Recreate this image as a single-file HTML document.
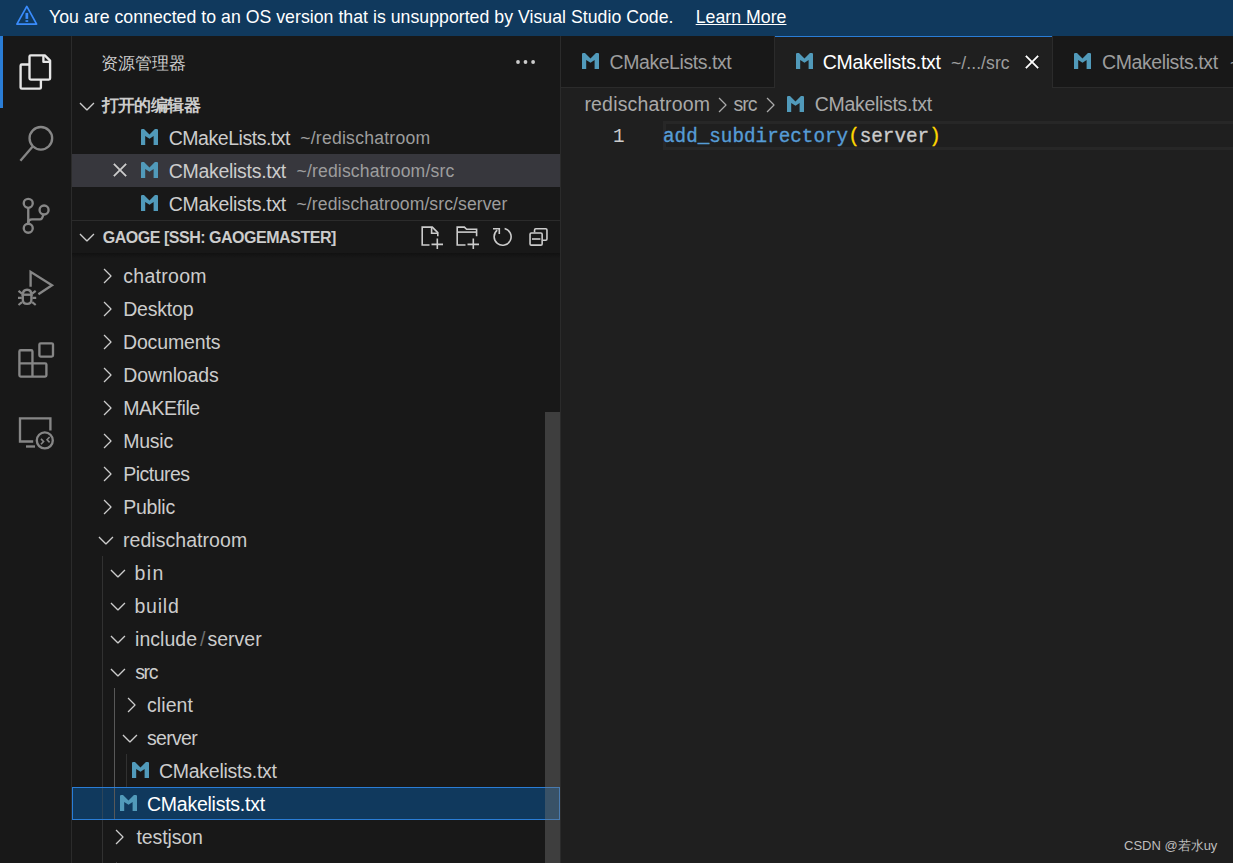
<!DOCTYPE html>
<html><head><meta charset="utf-8">
<style>
*{margin:0;padding:0;box-sizing:border-box}
html,body{width:1233px;height:863px;overflow:hidden;background:#1f1f1f}
body{position:relative;font-family:"Liberation Sans",sans-serif;color:#cccccc}
.a{position:absolute}
.t{position:absolute;white-space:pre;line-height:1}
svg{position:absolute;overflow:visible}
</style></head><body>
<div class="a" style="left:0;top:0;width:1233px;height:36px;background:#10395d"></div>
<div class="a" style="left:0;top:36px;width:71px;height:827px;background:#181818"></div>
<div class="a" style="left:71px;top:36px;width:1px;height:827px;background:#2b2b2b"></div>
<div class="a" style="left:72px;top:36px;width:488px;height:827px;background:#181818"></div>
<div class="a" style="left:560px;top:36px;width:1px;height:827px;background:#2b2b2b"></div>
<div class="a" style="left:561px;top:36px;width:672px;height:52px;background:#181818"></div>
<div class="a" style="left:561px;top:87px;width:672px;height:1px;background:#2b2b2b"></div>
<div class="a" style="left:774px;top:36px;width:1px;height:52px;background:#2b2b2b"></div>
<div class="a" style="left:775px;top:36px;width:277px;height:52px;background:#1f1f1f"></div>
<div class="a" style="left:775px;top:36px;width:277px;height:1px;background:#2a7dd6"></div>
<div class="a" style="left:1052px;top:36px;width:1px;height:52px;background:#2b2b2b"></div>
<svg style="left:0;top:0" width="60" height="36" viewBox="0 0 60 36">
  <path d="M26.8 6.4 L36.6 24.1 L16.9 24.1 Z" fill="none" stroke="#3a8cfc" stroke-width="1.7" stroke-linejoin="round"/>
  <rect x="25.5" y="12.9" width="2.7" height="6" fill="#3a8cfc"/>
  <rect x="25.5" y="20.2" width="2.7" height="1.7" fill="#3a8cfc"/>
</svg>
<div class="t" style="left:49.02px;top:8.62px;font-size:17.7px;color:#ffffff;letter-spacing:0.027px;">You are connected to an OS version that is unsupported by Visual Studio Code.</div>
<div class="t" style="left:695.68px;top:8.62px;font-size:17.7px;color:#ffffff;letter-spacing:0.036px;text-decoration:underline">Learn More</div>
<div class="a" style="left:0;top:36px;width:3px;height:72px;background:#2a7dd6"></div>

<svg style="left:0;top:0" width="1" height="1" fill="none" stroke-width="2.35">
 <g stroke="#e6e6e6" stroke-linejoin="round">
  <path d="M29.5 64.5 H21.8 q-1.2 0 -1.2 1.2 V87.4 q0 1.2 1.2 1.2 H39.7 q1.2 0 1.2 -1.2 V79.6"/>
  <path d="M30.8 55.3 H44.8 L50.1 60.6 V78.3 q0 1.3 -1.3 1.3 H30.8 q-1.3 0 -1.3 -1.3 V56.6 q0 -1.3 1.3 -1.3 Z"/>
  <path d="M43.4 55.3 V61.8 H50.1"/>
 </g>
 <g stroke="#868686">
  <circle cx="40.85" cy="138.3" r="11.3"/>
  <path d="M32.9 146.3 L20.4 160.8"/>
  <circle cx="28.25" cy="203.3" r="4.5"/>
  <circle cx="28.25" cy="228.2" r="4.5"/>
  <circle cx="44.07" cy="210" r="4.5"/>
  <path d="M28.25 207.8 V223.7"/>
  <path d="M28.25 223 Q28.25 219.3 32 219.3 H40 Q42.3 219.3 43.3 214.4"/>
  <path d="M30.6 286.8 V271.8 L52 285.2 L38.4 294.2" stroke-linejoin="miter"/>
  <path d="M22.8 294.7 q0 -5 4.3 -5 q4.3 0 4.3 5 V299.5 q0 4.4 -4.3 4.4 q-4.3 0 -4.3 -4.4 Z"/>
  <path d="M21.5 294.7 H32.7"/>
  <path d="M18.5 290.8 L22 293.6 M18 297.9 H21.8 M18.5 305 L22 302.2 M35.7 290.8 L32.2 293.6 M36.2 297.9 H32.4 M35.7 305 L32.2 302.2" stroke-width="2.2"/>
  <path d="M32.45 376.6 V351.5 q0 -1.3 -1.3 -1.3 H20.7 q-1.3 0 -1.3 1.3 V375.3 q0 1.3 1.3 1.3 H45.1 q1.3 0 1.3 -1.3 V364.6 q0 -1.3 -1.3 -1.3 H19.4"/>
  <rect x="39.4" y="343.3" width="13.6" height="13.3" rx="1.3"/>
  <path d="M33.2 441.5 H20 V418.3 H50.4 V430.6"/>
  <path d="M26 446.5 H35"/>
  <circle cx="44.8" cy="440.4" r="8"/>
  <path d="M41 438.9 L43.6 441.6 L41 444.3 M49.6 437 L47 439.7 L49.6 442.4" stroke-width="1.6"/>
 </g>
</svg>
<div class="t" style="left:100.8px;top:55px;font-size:16.5px;color:#cccccc;">资源管理器</div>
<svg style="left:0;top:0" width="1" height="1"><circle cx="518" cy="62" r="1.9" fill="#cccccc"/><circle cx="525.5" cy="62" r="1.9" fill="#cccccc"/><circle cx="533.1" cy="62" r="1.9" fill="#cccccc"/></svg>
<svg style="left:75px;top:94px" width="24" height="24" viewBox="0 0 16 16"><path d="M7.976 10.072l4.357-4.357.62.618L8.284 11h-.618L3 6.333l.619-.618 4.357 4.357z" fill="#cccccc"/></svg>
<div class="t" style="left:101.5px;top:96.5px;font-size:16.5px;color:#cccccc;font-weight:bold;letter-spacing:-0.55px">打开的编辑器</div>
<div class="a" style="left:72px;top:154px;width:488px;height:33px;background:#37373d"></div>
<svg style="left:141px;top:129px" width="18" height="17"><path d="M0.00 16.10 L0.00 0.80 L0.80 0.00 L3.00 0.00 L8.50 5.60 L13.90 0.00 L16.20 0.00 L17.00 0.80 L17.00 16.10 L12.60 16.10 L12.60 7.00 L8.50 9.80 L4.20 7.00 L4.20 16.10 Z" fill="#519aba"/></svg>
<div class="t" style="left:168.74px;top:128.59px;font-size:19.5px;color:#cccccc;letter-spacing:-0.468px;">CMakeLists.txt</div>
<div class="t" style="left:300.24px;top:130.10px;font-size:17.6px;color:#9d9d9d;letter-spacing:0.229px;">~/redischatroom</div>
<svg style="left:141px;top:162px" width="18" height="17"><path d="M0.00 16.10 L0.00 0.80 L0.80 0.00 L3.00 0.00 L8.50 5.60 L13.90 0.00 L16.20 0.00 L17.00 0.80 L17.00 16.10 L12.60 16.10 L12.60 7.00 L8.50 9.80 L4.20 7.00 L4.20 16.10 Z" fill="#519aba"/></svg>
<div class="t" style="left:168.74px;top:161.59px;font-size:19.5px;color:#cccccc;letter-spacing:-0.295px;">CMakelists.txt</div>
<div class="t" style="left:296.50px;top:163.10px;font-size:17.6px;color:#9d9d9d;letter-spacing:0.151px;">~/redischatroom/src</div>
<svg style="left:108px;top:158px" width="24" height="24" viewBox="0 0 16 16"><path d="M8 8.707l3.646 3.647.708-.707L8.707 8l3.647-3.646-.707-.708L8 7.293 4.354 3.646l-.707.708L7.293 8l-3.646 3.646.707.708L8 8.707z" fill="#cccccc" stroke="#cccccc" stroke-width="0.3"/></svg>
<svg style="left:141px;top:195px" width="18" height="17"><path d="M0.00 16.10 L0.00 0.80 L0.80 0.00 L3.00 0.00 L8.50 5.60 L13.90 0.00 L16.20 0.00 L17.00 0.80 L17.00 16.10 L12.60 16.10 L12.60 7.00 L8.50 9.80 L4.20 7.00 L4.20 16.10 Z" fill="#519aba"/></svg>
<div class="t" style="left:168.74px;top:194.59px;font-size:19.5px;color:#cccccc;letter-spacing:-0.295px;">CMakelists.txt</div>
<div class="t" style="left:296.50px;top:196.10px;font-size:17.6px;color:#9d9d9d;letter-spacing:0.083px;">~/redischatroom/src/server</div>
<div class="a" style="left:72px;top:220px;width:488px;height:1px;background:#2b2b2b"></div>
<svg style="left:75px;top:225px" width="24" height="24" viewBox="0 0 16 16"><path d="M7.976 10.072l4.357-4.357.62.618L8.284 11h-.618L3 6.333l.619-.618 4.357 4.357z" fill="#cccccc"/></svg>
<div class="t" style="left:102.74px;top:230.06px;font-size:16px;color:#cccccc;font-weight:bold;letter-spacing:-0.473px;">GAOGE [SSH: GAOGEMASTER]</div>

<svg style="left:0;top:0" width="1" height="1" fill="none" stroke="#cccccc" stroke-width="1.6">
  <path d="M429.5 245 H422.2 V227.1 H432.3 L437.8 232.6 V236.2"/>
  <path d="M431.6 227.1 V233.3 H437.8"/>
  <path d="M431.5 244.4 H443 M437.3 238.4 V249"/>
  <path d="M465.5 245 H457.2 V227.1 H464.4 L466.6 229.3 H476.6 V236.2"/>
  <path d="M457.2 232.1 H476.6"/>
  <path d="M467.5 244.4 H479 M473.3 238.4 V249"/>
  <path d="M504.6 228.5 A8.5 8.5 0 1 1 497.2 230.2"/>
  <path d="M493 228.8 H499.3 V234"/>
  <path d="M534.55 232.3 V230 q0 -1.25 1.25 -1.25 H545.7 q1.25 0 1.25 1.25 V239 q0 1.25 -1.25 1.25 H542.5"/>
  <rect x="530.05" y="232.95" width="12.1" height="12.2" rx="1.25"/>
  <path d="M532 239 H540.4"/>
</svg>
<div class="a" style="left:72px;top:253px;width:488px;height:5px;background:linear-gradient(#111111,rgba(24,24,24,0))"></div>
<div class="a" style="left:72px;top:787px;width:488px;height:33px;background:#10395d"></div>
<div class="a" style="left:102px;top:556px;width:1px;height:307px;background:rgba(88,88,88,0.4)"></div>
<div class="a" style="left:114px;top:688px;width:1px;height:132px;background:#585858"></div>
<div class="a" style="left:126px;top:754px;width:1px;height:33px;background:rgba(88,88,88,0.4)"></div>
<svg style="left:94.5px;top:263.5px" width="24" height="24" viewBox="0 0 16 16"><path d="M10.072 8.024L5.715 3.667l.618-.62L11 7.716v.618L6.333 13l-.618-.619 4.357-4.357z" fill="#cccccc"/></svg>
<div class="t" style="left:123.24px;top:266.59px;font-size:19.5px;color:#cccccc;letter-spacing:0.297px;">chatroom</div>
<svg style="left:94.5px;top:296.5px" width="24" height="24" viewBox="0 0 16 16"><path d="M10.072 8.024L5.715 3.667l.618-.62L11 7.716v.618L6.333 13l-.618-.619 4.357-4.357z" fill="#cccccc"/></svg>
<div class="t" style="left:123.20px;top:299.59px;font-size:19.5px;color:#cccccc;letter-spacing:-0.187px;">Desktop</div>
<svg style="left:94.5px;top:329.5px" width="24" height="24" viewBox="0 0 16 16"><path d="M10.072 8.024L5.715 3.667l.618-.62L11 7.716v.618L6.333 13l-.618-.619 4.357-4.357z" fill="#cccccc"/></svg>
<div class="t" style="left:122.94px;top:332.59px;font-size:19.5px;color:#cccccc;letter-spacing:-0.120px;">Documents</div>
<svg style="left:94.5px;top:362.5px" width="24" height="24" viewBox="0 0 16 16"><path d="M10.072 8.024L5.715 3.667l.618-.62L11 7.716v.618L6.333 13l-.618-.619 4.357-4.357z" fill="#cccccc"/></svg>
<div class="t" style="left:123.20px;top:365.59px;font-size:19.5px;color:#cccccc;letter-spacing:-0.100px;">Downloads</div>
<svg style="left:94.5px;top:395.5px" width="24" height="24" viewBox="0 0 16 16"><path d="M10.072 8.024L5.715 3.667l.618-.62L11 7.716v.618L6.333 13l-.618-.619 4.357-4.357z" fill="#cccccc"/></svg>
<div class="t" style="left:123.20px;top:398.59px;font-size:19.5px;color:#cccccc;letter-spacing:-0.457px;">MAKEfile</div>
<svg style="left:94.5px;top:428.5px" width="24" height="24" viewBox="0 0 16 16"><path d="M10.072 8.024L5.715 3.667l.618-.62L11 7.716v.618L6.333 13l-.618-.619 4.357-4.357z" fill="#cccccc"/></svg>
<div class="t" style="left:123.20px;top:431.59px;font-size:19.5px;color:#cccccc;letter-spacing:-0.240px;">Music</div>
<svg style="left:94.5px;top:461.5px" width="24" height="24" viewBox="0 0 16 16"><path d="M10.072 8.024L5.715 3.667l.618-.62L11 7.716v.618L6.333 13l-.618-.619 4.357-4.357z" fill="#cccccc"/></svg>
<div class="t" style="left:123.20px;top:464.59px;font-size:19.5px;color:#cccccc;letter-spacing:-0.503px;">Pictures</div>
<svg style="left:94.5px;top:494.5px" width="24" height="24" viewBox="0 0 16 16"><path d="M10.072 8.024L5.715 3.667l.618-.62L11 7.716v.618L6.333 13l-.618-.619 4.357-4.357z" fill="#cccccc"/></svg>
<div class="t" style="left:123.20px;top:497.59px;font-size:19.5px;color:#cccccc;letter-spacing:-0.224px;">Public</div>
<svg style="left:94px;top:527.5px" width="24" height="24" viewBox="0 0 16 16"><path d="M7.976 10.072l4.357-4.357.62.618L8.284 11h-.618L3 6.333l.619-.618 4.357 4.357z" fill="#cccccc"/></svg>
<div class="t" style="left:122.96px;top:530.59px;font-size:19.5px;color:#cccccc;letter-spacing:0.053px;">redischatroom</div>
<svg style="left:106px;top:560.5px" width="24" height="24" viewBox="0 0 16 16"><path d="M7.976 10.072l4.357-4.357.62.618L8.284 11h-.618L3 6.333l.619-.618 4.357 4.357z" fill="#cccccc"/></svg>
<div class="t" style="left:134.44px;top:563.59px;font-size:19.5px;color:#cccccc;letter-spacing:1.440px;">bin</div>
<svg style="left:106px;top:593.5px" width="24" height="24" viewBox="0 0 16 16"><path d="M7.976 10.072l4.357-4.357.62.618L8.284 11h-.618L3 6.333l.619-.618 4.357 4.357z" fill="#cccccc"/></svg>
<div class="t" style="left:134.44px;top:596.59px;font-size:19.5px;color:#cccccc;letter-spacing:0.800px;">build</div>
<svg style="left:106px;top:626.5px" width="24" height="24" viewBox="0 0 16 16"><path d="M7.976 10.072l4.357-4.357.62.618L8.284 11h-.618L3 6.333l.619-.618 4.357 4.357z" fill="#cccccc"/></svg>
<div class="t" style="left:135.08px;top:629.59px;font-size:19.5px;color:#cccccc;letter-spacing:0.017px;">include<span style="color:#6e6e6e;margin:0 2px 0 3px">/</span>server</div>
<svg style="left:106px;top:659.5px" width="24" height="24" viewBox="0 0 16 16"><path d="M7.976 10.072l4.357-4.357.62.618L8.284 11h-.618L3 6.333l.619-.618 4.357 4.357z" fill="#cccccc"/></svg>
<div class="t" style="left:135.24px;top:662.59px;font-size:19.5px;color:#cccccc;letter-spacing:-1.360px;">src</div>
<svg style="left:119px;top:692.5px" width="24" height="24" viewBox="0 0 16 16"><path d="M10.072 8.024L5.715 3.667l.618-.62L11 7.716v.618L6.333 13l-.618-.619 4.357-4.357z" fill="#cccccc"/></svg>
<div class="t" style="left:146.98px;top:695.59px;font-size:19.5px;color:#cccccc;letter-spacing:0.096px;">client</div>
<svg style="left:118px;top:725.5px" width="24" height="24" viewBox="0 0 16 16"><path d="M7.976 10.072l4.357-4.357.62.618L8.284 11h-.618L3 6.333l.619-.618 4.357 4.357z" fill="#cccccc"/></svg>
<div class="t" style="left:146.98px;top:728.59px;font-size:19.5px;color:#cccccc;letter-spacing:-0.672px;">server</div>
<svg style="left:131.8px;top:762px" width="18" height="17"><path d="M0.00 16.10 L0.00 0.80 L0.80 0.00 L3.00 0.00 L8.50 5.60 L13.90 0.00 L16.20 0.00 L17.00 0.80 L17.00 16.10 L12.60 16.10 L12.60 7.00 L8.50 9.80 L4.20 7.00 L4.20 16.10 Z" fill="#519aba"/></svg>
<div class="t" style="left:158.96px;top:761.59px;font-size:19.5px;color:#cccccc;letter-spacing:-0.258px;">CMakelists.txt</div>
<svg style="left:119.8px;top:795px" width="18" height="17"><path d="M0.00 16.10 L0.00 0.80 L0.80 0.00 L3.00 0.00 L8.50 5.60 L13.90 0.00 L16.20 0.00 L17.00 0.80 L17.00 16.10 L12.60 16.10 L12.60 7.00 L8.50 9.80 L4.20 7.00 L4.20 16.10 Z" fill="#519aba"/></svg>
<div class="t" style="left:146.98px;top:794.59px;font-size:19.5px;color:#ffffff;letter-spacing:-0.246px;">CMakelists.txt</div>
<svg style="left:107px;top:824.5px" width="24" height="24" viewBox="0 0 16 16"><path d="M10.072 8.024L5.715 3.667l.618-.62L11 7.716v.618L6.333 13l-.618-.619 4.357-4.357z" fill="#cccccc"/></svg>
<div class="t" style="left:136.54px;top:827.59px;font-size:19.5px;color:#cccccc;letter-spacing:-0.114px;">testjson</div>
<svg style="left:107px;top:857.5px" width="24" height="24" viewBox="0 0 16 16"><path d="M10.072 8.024L5.715 3.667l.618-.62L11 7.716v.618L6.333 13l-.618-.619 4.357-4.357z" fill="#cccccc"/></svg>
<div class="a" style="left:72px;top:787px;width:488px;height:33px;border:1px solid #2a7dd6"></div>
<div class="a" style="left:545px;top:412px;width:15px;height:451px;background:rgba(121,121,121,0.4)"></div>
<svg style="left:582px;top:53px" width="18" height="17"><path d="M0.00 16.10 L0.00 0.80 L0.80 0.00 L3.00 0.00 L8.50 5.60 L13.90 0.00 L16.20 0.00 L17.00 0.80 L17.00 16.10 L12.60 16.10 L12.60 7.00 L8.50 9.80 L4.20 7.00 L4.20 16.10 Z" fill="#519aba"/></svg>
<div class="t" style="left:609.50px;top:53.09px;font-size:19.5px;color:#9d9d9d;letter-spacing:-0.431px;">CMakeLists.txt</div>
<svg style="left:796px;top:53px" width="18" height="17"><path d="M0.00 16.10 L0.00 0.80 L0.80 0.00 L3.00 0.00 L8.50 5.60 L13.90 0.00 L16.20 0.00 L17.00 0.80 L17.00 16.10 L12.60 16.10 L12.60 7.00 L8.50 9.80 L4.20 7.00 L4.20 16.10 Z" fill="#519aba"/></svg>
<div class="t" style="left:822.72px;top:53.09px;font-size:19.5px;color:#ffffff;letter-spacing:-0.234px;">CMakelists.txt</div>
<div class="t" style="left:950.96px;top:54.70px;font-size:17.6px;color:#9d9d9d;letter-spacing:0.060px;">~/.../src</div>
<svg style="left:1019.6px;top:50px" width="24" height="24" viewBox="0 0 16 16"><path d="M8 8.707l3.646 3.647.708-.707L8.707 8l3.647-3.646-.707-.708L8 7.293 4.354 3.646l-.707.708L7.293 8l-3.646 3.646.707.708L8 8.707z" fill="#ffffff" stroke="#ffffff" stroke-width="0.3"/></svg>
<svg style="left:1074px;top:53px" width="18" height="17"><path d="M0.00 16.10 L0.00 0.80 L0.80 0.00 L3.00 0.00 L8.50 5.60 L13.90 0.00 L16.20 0.00 L17.00 0.80 L17.00 16.10 L12.60 16.10 L12.60 7.00 L8.50 9.80 L4.20 7.00 L4.20 16.10 Z" fill="#519aba"/></svg>
<div class="t" style="left:1102.00px;top:53.09px;font-size:19.5px;color:#9d9d9d;letter-spacing:-0.406px;">CMakelists.txt</div>
<div class="t" style="left:1230.00px;top:54.70px;font-size:17.6px;color:#9d9d9d;">~/</div>
<div class="t" style="left:584.44px;top:95.39px;font-size:19.5px;color:#a9a9a9;letter-spacing:0.173px;">redischatroom</div>
<svg style="left:710px;top:93px" width="24" height="24" viewBox="0 0 16 16"><path d="M10.072 8.024L5.715 3.667l.618-.62L11 7.716v.618L6.333 13l-.618-.619 4.357-4.357z" fill="#a9a9a9"/></svg>
<div class="t" style="left:733.48px;top:95.39px;font-size:19.5px;color:#a9a9a9;letter-spacing:-1.040px;">src</div>
<svg style="left:758px;top:93px" width="24" height="24" viewBox="0 0 16 16"><path d="M10.072 8.024L5.715 3.667l.618-.62L11 7.716v.618L6.333 13l-.618-.619 4.357-4.357z" fill="#a9a9a9"/></svg>
<svg style="left:787px;top:96px" width="18" height="17"><path d="M0.00 16.10 L0.00 0.80 L0.80 0.00 L3.00 0.00 L8.50 5.60 L13.90 0.00 L16.20 0.00 L17.00 0.80 L17.00 16.10 L12.60 16.10 L12.60 7.00 L8.50 9.80 L4.20 7.00 L4.20 16.10 Z" fill="#519aba"/></svg>
<div class="t" style="left:814.72px;top:95.39px;font-size:19.5px;color:#a9a9a9;letter-spacing:-0.308px;">CMakelists.txt</div>
<div class="a" style="left:663px;top:121px;width:570px;height:28.5px;border:3px solid #272727;border-right:none"></div>
<div class="t" style="left:613px;top:128px;font-family:'Liberation Mono',monospace;font-size:19.3px;color:#cccccc">1</div>
<div class="t" style="left:663px;top:128px;font-family:'Liberation Mono',monospace;font-size:19.3px;color:#cccccc;-webkit-text-stroke:0.35px currentColor"><span style="color:#569cd6">add_subdirectory</span><span style="color:#ffd700">(</span>server<span style="color:#ffd700">)</span></div>
<div class="t" style="left:1124px;top:838.7px;font-size:13px;color:#bdbdbd;">CSDN @若水uy</div>
</body></html>
